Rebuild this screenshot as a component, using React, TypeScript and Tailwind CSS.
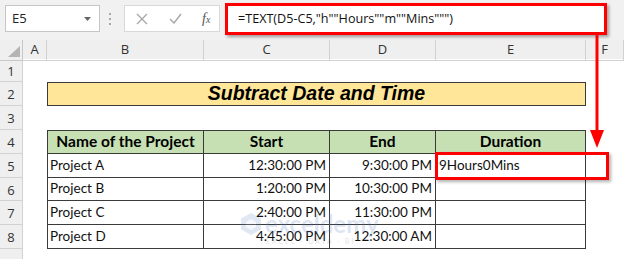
import React from "react";

const cols = "grid-cols-[23px_24px_157px_126px_106px_150px_38px]";

const rows = [
  { name: "Project A", start: "12:30:00 PM", end: "9:30:00 PM", dur: "9Hours0Mins" },
  { name: "Project B", start: "1:20:00 PM", end: "10:30:00 PM", dur: "" },
  { name: "Project C", start: "2:40:00 PM", end: "11:30:00 PM", dur: "" },
  { name: "Project D", start: "4:45:00 PM", end: "12:30:00 AM", dur: "" },
];

function RowNum({ n }: { n: number | string }) {
  return (
    <div className="flex items-center justify-center border-b border-r border-[#d2d2d2] bg-[#efefef] pt-[2px] text-[13px] leading-none text-[#333]">
      {n}
    </div>
  );
}

function FormulaBar() {
  return (
    <div className="flex h-[40px] items-start bg-[#f1f1f1] pt-[5px]">
      <div className="ml-[5px] flex h-[27px] w-[95px] items-center justify-between border border-[#c6c6c6] bg-white pl-[6px] pr-[8px] text-[13px] text-[#222]">
        <span>E5</span>
        <svg width="7" height="4" viewBox="0 0 7 4">
          <path d="M0 0 L7 0 L3.5 4 Z" fill="#666" />
        </svg>
      </div>
      <div className="ml-[9px] mt-[8px] flex h-[12px] flex-col justify-between">
        <span className="block h-[2px] w-[2px] bg-[#a8a8a8]" />
        <span className="block h-[2px] w-[2px] bg-[#a8a8a8]" />
        <span className="block h-[2px] w-[2px] bg-[#a8a8a8]" />
      </div>
      <div className="ml-[13px] flex h-[27px] w-[96px] items-center border border-[#d8d8d8] bg-white pl-[11px]">
        <svg width="12" height="12" viewBox="0 0 12 12">
          <path d="M1 1 L11 11 M11 1 L1 11" stroke="#a6a6a6" strokeWidth="1.3" />
        </svg>
        <svg className="ml-[21px]" width="13" height="11" viewBox="0 0 13 11">
          <path d="M1 6 L5 10 L12 1" stroke="#a6a6a6" strokeWidth="1.4" fill="none" />
        </svg>
        <span className="ml-[20px] font-['Liberation_Serif'] text-[14px] italic leading-none text-[#555]">
          f<span className="text-[10px]">x</span>
        </span>
      </div>
      <div className="ml-[5px] mt-[-2px] flex h-[32px] w-[382px] items-center border-[3px] border-[#ff0000] bg-white pl-[10px] text-[12.6px] text-[#111] shadow-[2px_2px_3px_rgba(0,0,0,0.35)]">
        =TEXT(D5-C5,"h""Hours""m""Mins""")
      </div>
    </div>
  );
}

function ColumnHeaders() {
  const letters = ["A", "B", "C", "D", "E", "F"];
  return (
    <div className={`grid h-[19px] ${cols} bg-[#efefef] text-[13px] text-[#333]`}>
      <div className="relative border-b border-r border-[#c8c8c8]">
        <svg className="absolute bottom-[3px] right-[2px]" width="12" height="11" viewBox="0 0 12 11">
          <path d="M12 0 L12 11 L0 11 Z" fill="#b4b4b4" />
        </svg>
      </div>
      {letters.map((l) => (
        <div key={l} className="flex items-center justify-center border-b border-r border-[#d2d2d2]">
          {l}
        </div>
      ))}
    </div>
  );
}

export default function App() {
  const cell = "font-['Lato'] text-[13.5px] leading-none text-[#111]";
  const tb = "border-[#3a3a3a]";
  return (
    <div className="relative h-[259px] w-[624px] overflow-hidden bg-white font-['Open_Sans',sans-serif]">
      <FormulaBar />
      <ColumnHeaders />

      <div className={`grid ${cols} grid-rows-[23px_24px_24px_24px_24px_23px_24px_24px_24px]`}>
        {/* row 1 */}
        <RowNum n={1} />
        <div className="col-span-6" />
        {/* row 2 */}
        <RowNum n={2} />
        <div />
        <div className={`col-span-4 flex items-center justify-center border ${tb} bg-[#ffe699] font-['Liberation_Sans'] text-[19.5px] font-bold italic leading-none text-black`}>
          Subtract Date and Time
        </div>
        <div />
        {/* row 3 */}
        <RowNum n={3} />
        <div className="col-span-6" />
        {/* row 4 */}
        <RowNum n={4} />
        <div />
        {["Name of the Project", "Start", "End", "Duration"].map((h, i) => (
          <div
            key={h}
            className={`flex items-center justify-center border-b border-r border-t ${tb} ${i === 0 ? "border-l" : ""} bg-[#c6e0b4] font-['Lato'] text-[15.5px] font-bold leading-none text-black`}
          >
            {h}
          </div>
        ))}
        <div />
        {rows.map((r, i) => (
          <React.Fragment key={r.name}>
            <RowNum n={i + 5} />
            <div />
            <div className={`flex items-center border-b border-l border-r ${tb} pl-[2px] ${cell}`}>{r.name}</div>
            <div className={`flex items-center justify-end border-b border-r ${tb} pr-[3px] ${cell}`}>{r.start}</div>
            <div className={`flex items-center justify-end border-b border-r ${tb} pr-[3px] ${cell}`}>{r.end}</div>
            <div className={`flex items-center border-b border-r ${tb} pl-[3px] ${cell}`}>{r.dur}</div>
            <div />
          </React.Fragment>
        ))}
        {/* row 9 */}
        <RowNum n="" />
        <div className="col-span-6" />
      </div>

      {/* watermark */}
      <div className="pointer-events-none absolute left-[240px] top-[212px] flex flex-col opacity-20">
        <div className="flex items-center gap-[3px]">
          <svg width="22" height="24" viewBox="0 0 22 24">
            <path d="M11 1 L21 6.5 L21 17.5 L11 23 L1 17.5 L1 6.5 Z" fill="#6b8fc9" />
            <path d="M11 7 L16 10 L16 15 L11 18 L6 15 L6 10 Z" fill="#fff" opacity="0.7" />
          </svg>
          <span className="font-['Lato'] text-[24px] font-bold leading-none text-[#5a7fbf]">exceldemy</span>
        </div>
        <span className="ml-[26px] mt-[2px] font-['Lato'] text-[7px] leading-none tracking-[2px] text-[#777]">EXCEL · DATA · BI</span>
      </div>

      {/* E5 annotation box */}
      <div className="pointer-events-none absolute left-[435px] top-[152px] h-[28px] w-[174px] border-[3px] border-[#ff0000] shadow-[2px_2px_3px_rgba(0,0,0,0.3)]" />

      {/* arrow */}
      <svg className="pointer-events-none absolute left-[588px] top-[35px]" width="20" height="116" viewBox="0 0 20 116">
        <path d="M9 0 L9 98" stroke="#ff0000" strokeWidth="3" />
        <path d="M2 95 L16 95 L9 113 Z" fill="#ff0000" />
      </svg>
    </div>
  );
}
